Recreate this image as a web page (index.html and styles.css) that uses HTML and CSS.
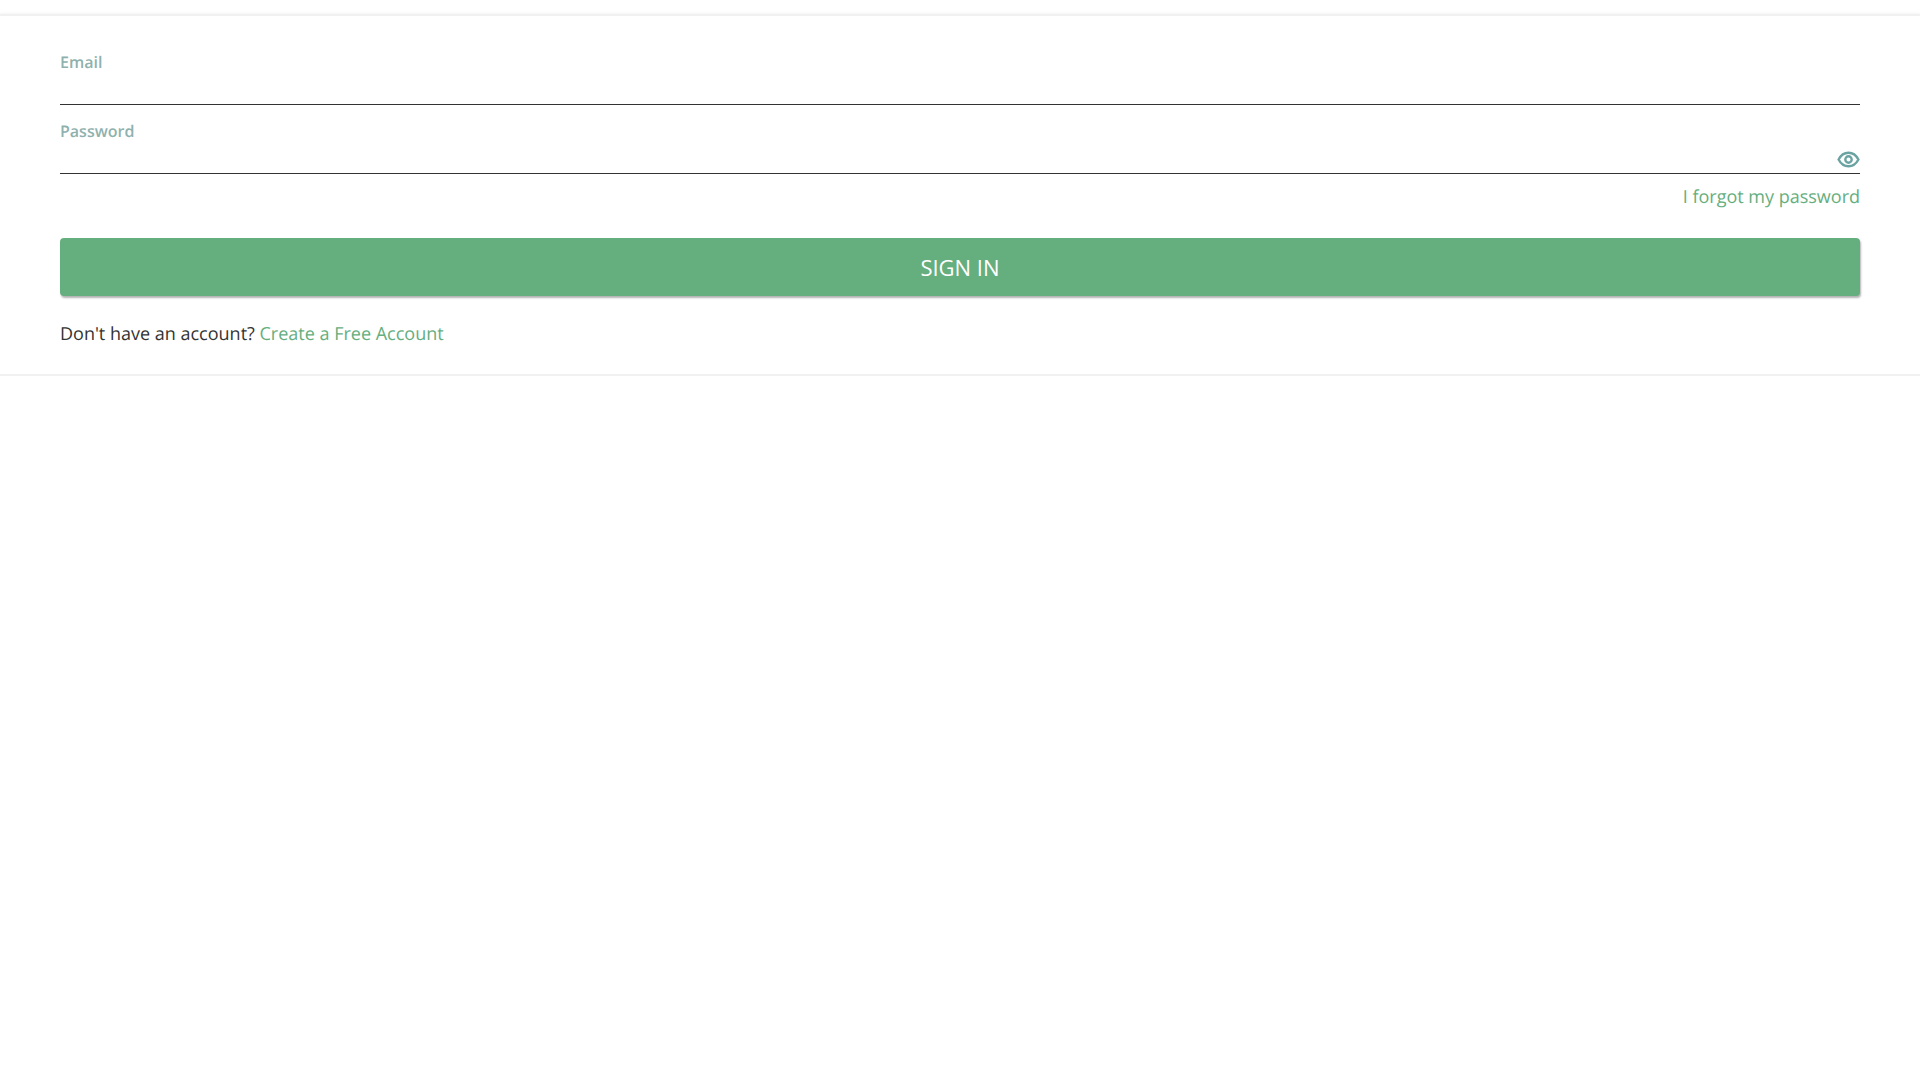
FILE: index.html
```html
<!DOCTYPE html>
<html lang="en">
<head>
<meta charset="utf-8">
<title>Sign in</title>
<link rel="stylesheet" href="styles.css">
</head>
<body>
<main class="card">
  <form class="form">
    <div class="field">
      <label class="label">Email</label>
      <div class="control"></div>
    </div>
    <div class="field">
      <label class="label">Password</label>
      <div class="control control-password">
        <svg class="eye" viewBox="0 0 24 18" width="23" height="17" aria-hidden="true">
          <path d="M1.5 9C4 4.2 7.7 1.8 12 1.8S20 4.2 22.5 9C20 13.8 16.3 16.2 12 16.2S4 13.8 1.5 9Z" fill="none" stroke="#6aa3a1" stroke-width="2.5"/>
          <circle cx="12" cy="9" r="3.4" fill="none" stroke="#6aa3a1" stroke-width="2.5"/>
        </svg>
      </div>
    </div>
    <div class="forgot-row"><a class="link" href="#">I forgot my password</a></div>
    <button class="submit" type="button">SIGN IN</button>
    <p class="signup">Don't have an account? <a class="link" href="#">Create a Free Account</a></p>
  </form>
</main>
</body>
</html>
```
FILE: styles.css
```css
html, body {
  margin: 0;
  padding: 0;
  background: #fff;
  font-family: "Open Sans", "Liberation Sans", sans-serif;
  text-rendering: geometricPrecision;
}
.card {
  margin-top: 14px;
  height: 362px;
  box-sizing: border-box;
  padding: 0 60px;
  background: #fff;
  border-top: 2px solid #f1f1f1;
  border-bottom: 2px solid #f1f1f1;
  box-shadow: 0 0 3px rgba(0, 0, 0, 0.08);
}
.form {
  display: flex;
  flex-direction: column;
  padding-top: 35px;
}
.field {
  display: flex;
  flex-direction: column;
}
.label {
  font-size: 16px;
  line-height: 22px;
  font-weight: 600;
  color: #8fb1ae;
}
.control {
  height: 31px;
  border-bottom: 1px solid #333;
  margin-bottom: 15px;
}
.field:nth-child(2) .control { margin-bottom: 0; }
.control-password {
  display: flex;
  justify-content: flex-end;
  align-items: flex-end;
}
.eye { display: block; margin-bottom: 5px; }
.forgot-row {
  display: flex;
  justify-content: flex-end;
  margin-top: 11px;
  font-size: 18px;
  line-height: 25px;
}
.link {
  color: #65ae7e;
  text-decoration: none;
}
.submit {
  display: block;
  width: 100%;
  height: 58px;
  margin-top: 28px;
  border: 0;
  border-radius: 4px;
  background: #65ae7e;
  color: #fff;
  font-family: inherit;
  font-size: 22px;
  font-weight: 400;
  box-shadow: 1px 2px 2px rgba(0, 0, 0, 0.3);
}
.signup {
  margin: 26px 0 0;
  font-size: 18px;
  line-height: 25px;
  color: #333;
}
```
